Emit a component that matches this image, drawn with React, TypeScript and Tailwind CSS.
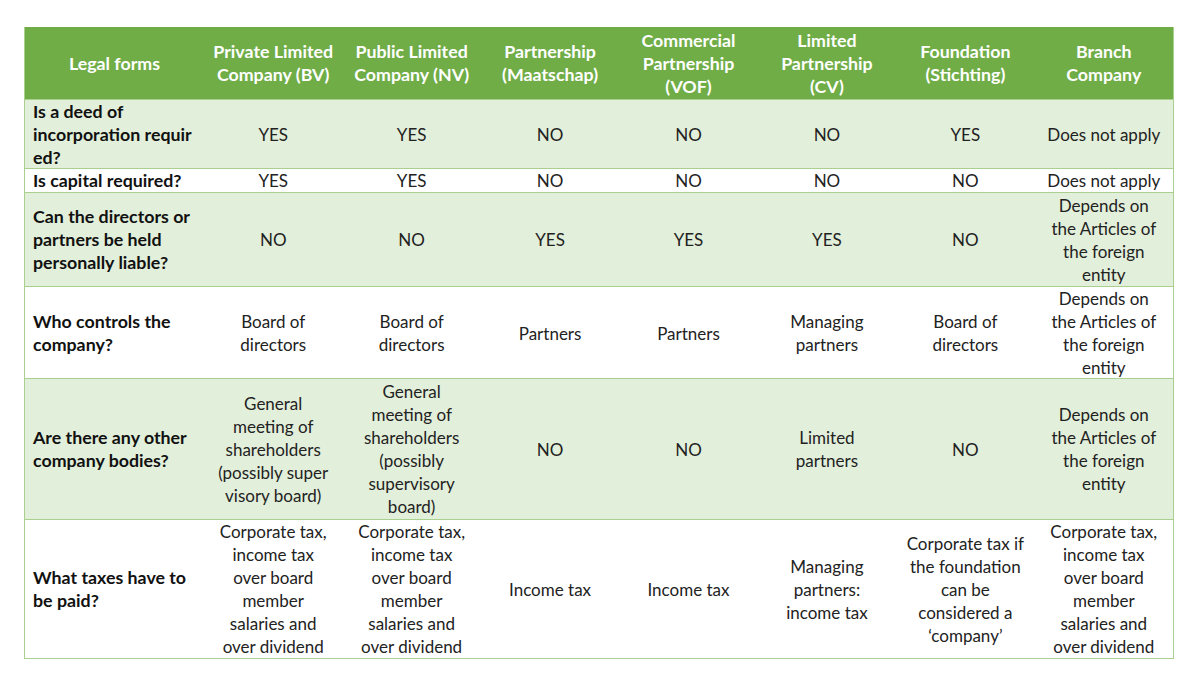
type Cell = string[];

const headers: Cell[] = [
  ["Legal forms"],
  ["Private Limited", "Company (BV)"],
  ["Public Limited", "Company (NV)"],
  ["Partnership", "(Maatschap)"],
  ["Commercial", "Partnership", "(VOF)"],
  ["Limited", "Partnership", "(CV)"],
  ["Foundation", "(Stichting)"],
  ["Branch", "Company"],
];

const rows: { h: string; shaded: boolean; cells: Cell[] }[] = [
  {
    h: "h-[69px]",
    shaded: true,
    cells: [
      ["Is a deed of", "incorporation requir", "ed?"],
      ["YES"],
      ["YES"],
      ["NO"],
      ["NO"],
      ["NO"],
      ["YES"],
      ["Does not apply"],
    ],
  },
  {
    h: "h-[24px]",
    shaded: false,
    cells: [
      ["Is capital required?"],
      ["YES"],
      ["YES"],
      ["NO"],
      ["NO"],
      ["NO"],
      ["NO"],
      ["Does not apply"],
    ],
  },
  {
    h: "h-[94px]",
    shaded: true,
    cells: [
      ["Can the directors or", "partners be held", "personally liable?"],
      ["NO"],
      ["NO"],
      ["YES"],
      ["YES"],
      ["YES"],
      ["NO"],
      ["Depends on", "the Articles of", "the foreign", "entity"],
    ],
  },
  {
    h: "h-[92px]",
    shaded: false,
    cells: [
      ["Who controls the", "company?"],
      ["Board of", "directors"],
      ["Board of", "directors"],
      ["Partners"],
      ["Partners"],
      ["Managing", "partners"],
      ["Board of", "directors"],
      ["Depends on", "the Articles of", "the foreign", "entity"],
    ],
  },
  {
    h: "h-[141px]",
    shaded: true,
    cells: [
      ["Are there any other", "company bodies?"],
      ["General", "meeting of", "shareholders", "(possibly super", "visory board)"],
      ["General", "meeting of", "shareholders", "(possibly", "supervisory", "board)"],
      ["NO"],
      ["NO"],
      ["Limited", "partners"],
      ["NO"],
      ["Depends on", "the Articles of", "the foreign", "entity"],
    ],
  },
  {
    h: "h-[139px]",
    shaded: false,
    cells: [
      ["What taxes have to", "be paid?"],
      ["Corporate tax,", "income tax", "over board", "member", "salaries and", "over dividend"],
      ["Corporate tax,", "income tax", "over board", "member", "salaries and", "over dividend"],
      ["Income tax"],
      ["Income tax"],
      ["Managing", "partners:", "income tax"],
      ["Corporate tax if", "the foundation", "can be", "considered a", "\u2018company\u2019"],
      ["Corporate tax,", "income tax", "over board", "member", "salaries and", "over dividend"],
    ],
  },
];

const Lines = ({ lines }: { lines: Cell }) => (
  <>
    {lines.map((l, i) => (
      <span key={i} className="block whitespace-nowrap">
        {l}
      </span>
    ))}
  </>
);

export default function App() {
  return (
    <div
      className="w-[1200px] h-[683px] bg-white pt-[27px] pl-[24px]"
      style={{ fontFamily: "Lato, 'Open Sans', sans-serif" }}
    >
      <div className="w-[1150px] border-x border-b border-[#a9d08e] text-[17px] leading-[23px]">
        <div className="grid grid-cols-[179px_repeat(7,1fr)] h-[72px] bg-[#70ad47] text-white font-bold text-[17.8px]">
          {headers.map((c, i) => (
            <div key={i} className="flex flex-col items-center justify-center text-center">
              <Lines lines={c} />
            </div>
          ))}
        </div>
        {rows.map((r, ri) => (
          <div
            key={ri}
            className={`grid grid-cols-[179px_repeat(7,1fr)] border-t border-[#a9d08e] text-[#222222] ${r.h} ${
              r.shaded ? "bg-[#e2efda]" : "bg-white"
            }`}
          >
            {r.cells.map((c, ci) => (
              <div
                key={ci}
                className={
                  ci === 0
                    ? "flex flex-col justify-center pl-[8px] font-bold text-[17.8px] text-[#111111]"
                    : "flex flex-col items-center justify-center text-center"
                }
              >
                <Lines lines={c} />
              </div>
            ))}
          </div>
        ))}
      </div>
    </div>
  );
}
